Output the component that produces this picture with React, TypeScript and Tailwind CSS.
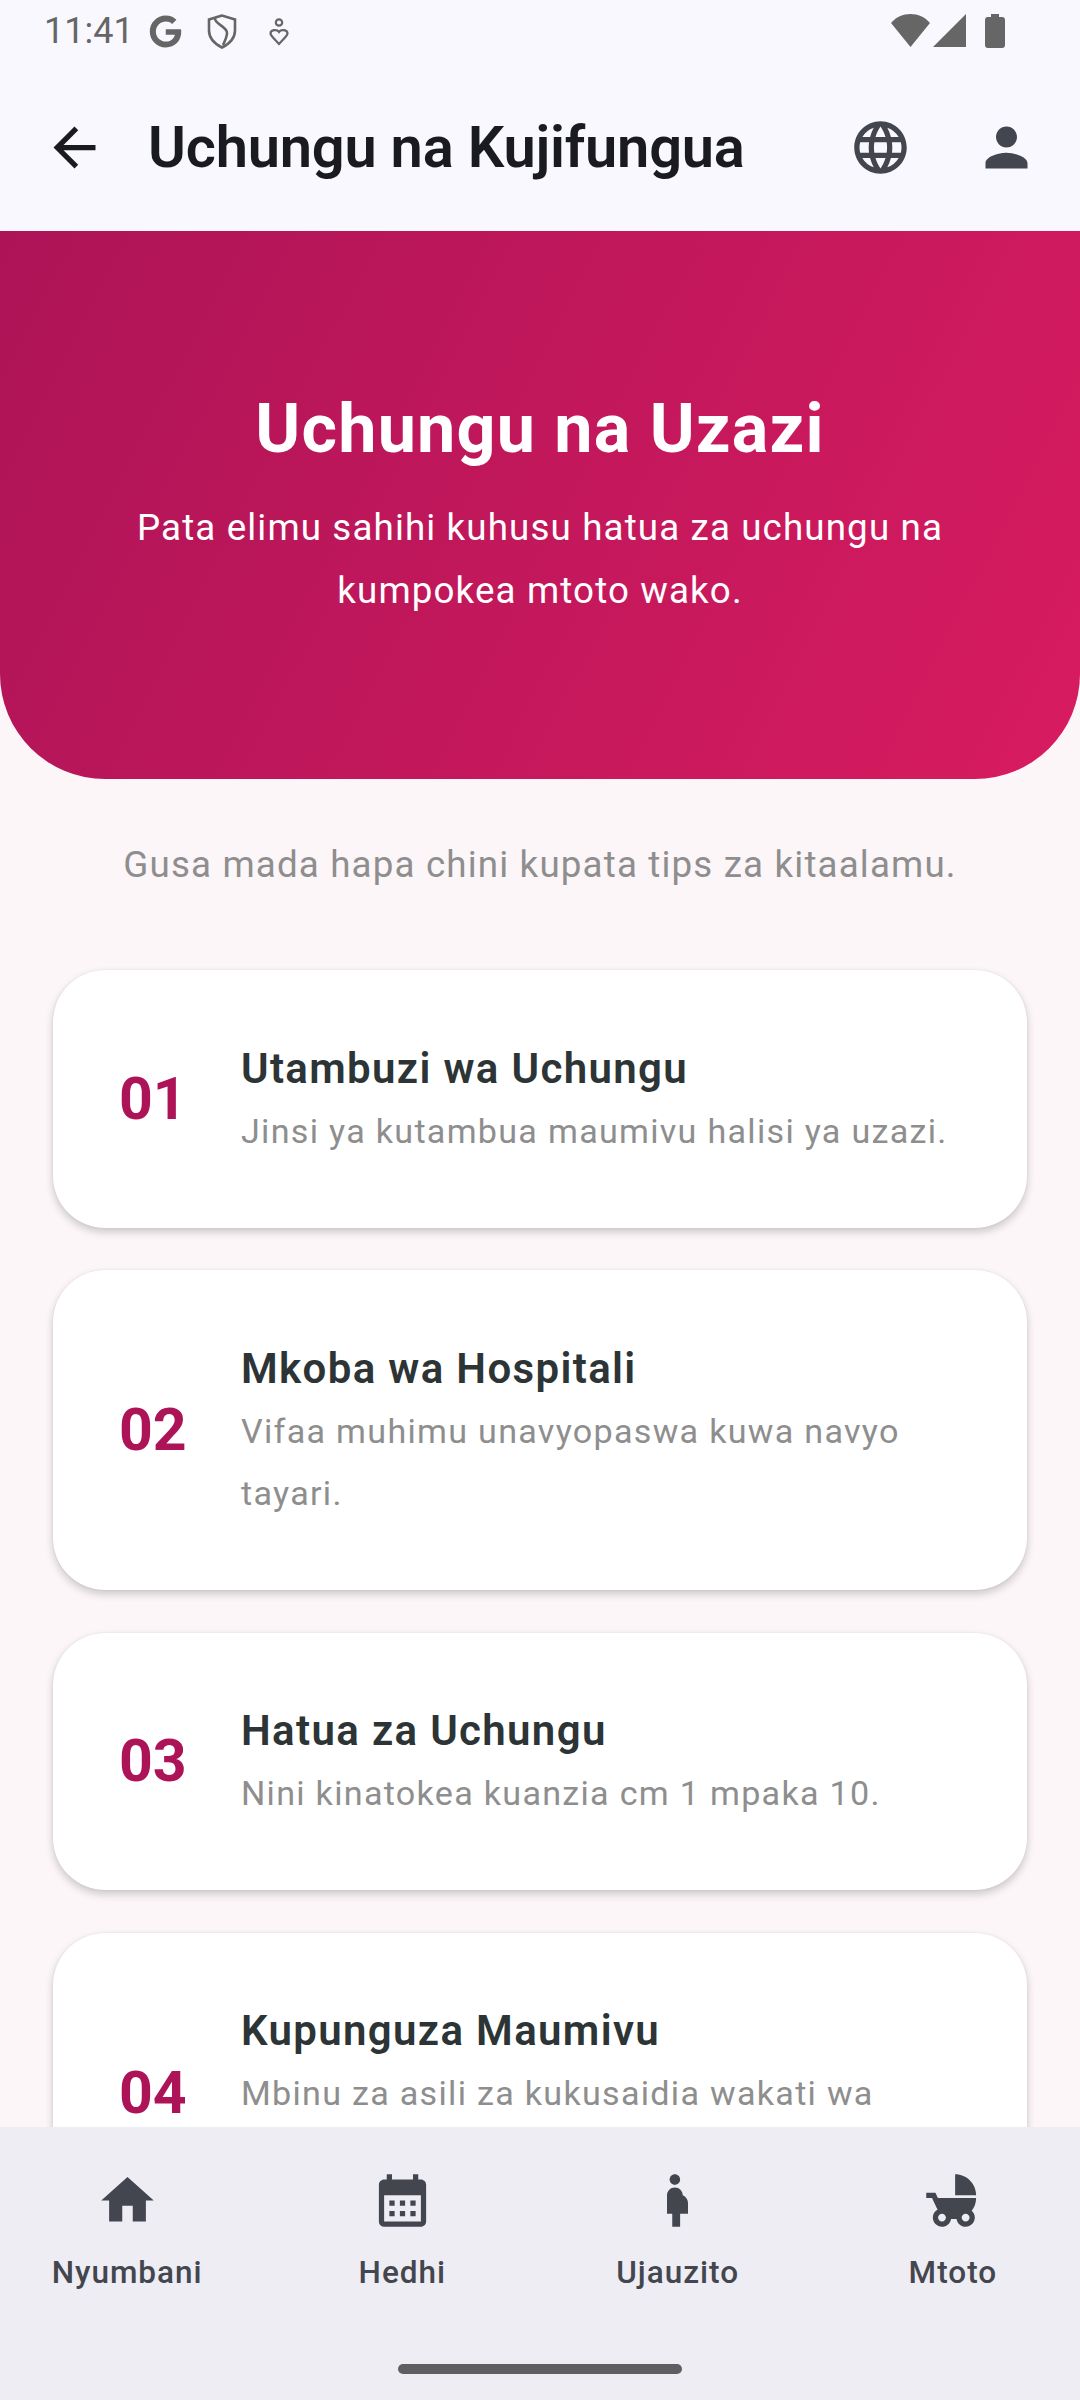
import { FaGoogle } from "react-icons/fa";

const cards = [
  { n: "01", title: "Utambuzi wa Uchungu", body: "Jinsi ya kutambua maumivu halisi ya uzazi." },
  { n: "02", title: "Mkoba wa Hospitali", body: "Vifaa muhimu unavyopaswa kuwa navyo tayari." },
  { n: "03", title: "Hatua za Uchungu", body: "Nini kinatokea kuanzia cm 1 mpaka 10." },
  { n: "04", title: "Kupunguza Maumivu", body: "Mbinu za asili za kukusaidia wakati wa uchungu." },
];

function StatusBar() {
  return (
    <div className="flex h-[63px] items-start justify-between pl-[44px] pr-[75px] pt-[14px] text-[#666666]">
      <div className="flex items-start">
        <span className="text-[36px] leading-[34px]">11:41</span>
        <FaGoogle className="ml-[15px] mt-[1px] h-[33px] w-[33px]" color="#666666" />
        <svg className="ml-[25px] h-[35px] w-[30px]" viewBox="0 0 30 35" fill="none" stroke="#666666" strokeWidth="2.6">
          <path d="M15 1.500 2 5.500v11c0 7 5 13 13 17 8-4 13-10 13-17v-11z" />
          <path d="M8 4c-1 6 12 8 12 15 0 4-2 8-4 12" />
        </svg>
        <svg className="ml-[32px] mt-[4px] h-[28px] w-[20px]" viewBox="0 0 20 28" fill="none" stroke="#666666" strokeWidth="2.2">
          <circle cx="10" cy="4.500" r="3.200" />
          <path d="M10 14c-2-3-8.500-2.500-8.500 1.500 0 1.500 1 2.500 8.500 10.500 7.500-8 8.500-9 8.500-10.500C18.500 11.500 12 11 10 14z" />
        </svg>
      </div>
      <div className="flex items-start">
        <svg className="h-[33px] w-[39px]" viewBox="0 0 39 33" fill="#666666">
          <path d="M0 9C5 3 12 0 19.500 0S34 3 39 9L19.500 33z" />
        </svg>
        <svg className="ml-[3px] h-[33px] w-[33px]" viewBox="0 0 33 33" fill="#666666">
          <path d="M33 0v33H0z" />
        </svg>
        <svg className="ml-[19px] h-[34px] w-[20px]" viewBox="0 0 20 34" fill="#666666">
          <path d="M6 0h8v3h3a3 3 0 0 1 3 3v25a3 3 0 0 1-3 3H3a3 3 0 0 1-3-3V6a3 3 0 0 1 3-3h3z" />
        </svg>
      </div>
    </div>
  );
}

function TopBar() {
  return (
    <div className="flex h-[168px] items-center pl-[11.5px] pr-[10.5px]">
      <div className="flex h-[126px] w-[126px] items-center justify-center">
        <svg className="h-[63px] w-[63px]" viewBox="0 0 24 24" fill="#1a1b20">
          <path d="M20 11H7.830l5.590-5.590L12 4l-8 8 8 8 1.410-1.410L7.830 13H20v-2z" />
        </svg>
      </div>
      <div className="ml-[10.5px] flex-1 text-[57.75px] font-semibold leading-[76px] tracking-[-0.2px] text-[#1a1b20]">
        Uchungu na Kujifungua
      </div>
      <div className="flex h-[126px] w-[126px] items-center justify-center">
        <svg className="h-[63px] w-[63px]" viewBox="0 0 24 24" fill="#44464f">
          <path d="M12 2C6.480 2 2 6.480 2 12s4.480 10 10 10 10-4.480 10-10S17.520 2 12 2zm6.930 6h-2.950a15.650 15.650 0 0 0-1.380-3.560A8.030 8.030 0 0 1 18.920 8zM12 4.040c.83 1.200 1.480 2.530 1.910 3.960h-3.820c.43-1.430 1.080-2.760 1.910-3.960zM4.260 14C4.100 13.360 4 12.690 4 12s.1-1.360.26-2h3.380c-.08.66-.14 1.320-.14 2s.06 1.340.14 2H4.260zm.82 2h2.950c.32 1.250.78 2.450 1.380 3.560A7.987 7.987 0 0 1 5.080 16zm2.950-8H5.080a7.987 7.987 0 0 1 4.330-3.560A15.650 15.650 0 0 0 8.030 8zM12 19.960c-.83-1.200-1.480-2.530-1.910-3.960h3.820c-.43 1.430-1.080 2.760-1.910 3.960zM14.340 14H9.660c-.09-.66-.16-1.320-.16-2s.07-1.350.16-2h4.680c.09.65.16 1.320.16 2s-.07 1.340-.16 2zm.25 5.560c.6-1.110 1.060-2.310 1.380-3.560h2.950a8.030 8.030 0 0 1-4.330 3.560zM16.360 14c.08-.66.14-1.320.14-2s-.06-1.340-.14-2h3.380c.16.64.26 1.310.26 2s-.1 1.360-.26 2h-3.380z" />
        </svg>
      </div>
      <div className="flex h-[126px] w-[126px] items-center justify-center">
        <svg className="h-[63px] w-[63px]" viewBox="0 0 24 24" fill="#44464f">
          <path d="M12 12c2.210 0 4-1.790 4-4s-1.790-4-4-4-4 1.790-4 4 1.790 4 4 4zm0 2c-2.670 0-8 1.340-8 4v2h16v-2c0-2.660-5.330-4-8-4z" />
        </svg>
      </div>
    </div>
  );
}

function Hero() {
  return (
    <div className="flex h-[548px] flex-col items-center rounded-b-[105px] bg-[linear-gradient(117deg,#ad1457,#d81b60)] pt-[157.5px] text-center text-white">
      <div className="text-[68.25px] font-bold leading-[80px] tracking-[1.2px]">Uchungu na Uzazi</div>
      <div className="mt-[27px] w-[860px] text-[36.75px] leading-[63px] tracking-[1.12px]">
        Pata elimu sahihi kuhusu hatua za uchungu na kumpokea mtoto wako.
      </div>
    </div>
  );
}

function Card({ n, title, body }: { n: string; title: string; body: string }) {
  return (
    <div className="flex items-center rounded-[52px] bg-white py-[65.5px] pl-[66px] pr-[66px] shadow-[0_4px_8px_rgba(0,0,0,0.2),0_0_2px_rgba(0,0,0,0.08)]">
      <div className="w-[122px] shrink-0 text-[59px] font-bold leading-[72px] text-[#ad1457]">{n}</div>
      <div className="min-w-0 flex-1 pt-[8px]">
        <div className="text-[42px] font-semibold leading-[49px] tracking-[1.34px] text-[#2d3436]">{title}</div>
        <div className="mt-[7px] text-[34.125px] leading-[62.5px] tracking-[1.28px] text-[#8e8e8e]">{body}</div>
      </div>
    </div>
  );
}

function HomeIcon() {
  return (
    <svg className="h-[63px] w-[63px]" viewBox="0 0 24 24" fill="#44464f">
      <path d="M10 20v-6h4v6h5v-8h3L12 3 2 12h3v8z" />
    </svg>
  );
}

function CalendarIcon() {
  return (
    <svg className="h-[63px] w-[63px]" viewBox="0 0 24 24" fill="#44464f">
      <path d="M19 4h-1V2h-2v2H8V2H6v2H5c-1.110 0-1.990.9-1.990 2L3 20a2 2 0 0 0 2 2h14c1.100 0 2-.9 2-2V6c0-1.100-.9-2-2-2zm0 16H5V10h14v10zM9 14H7v-2h2v2zm4 0h-2v-2h2v2zm4 0h-2v-2h2v2zm-8 4H7v-2h2v2zm4 0h-2v-2h2v2zm4 0h-2v-2h2v2z" />
    </svg>
  );
}

function PregnantIcon() {
  return (
    <svg className="h-[63px] w-[63px]" viewBox="0 0 24 24" fill="#44464f">
      <path d="M9 4c0-1.110.89-2 2-2s2 .89 2 2-.89 2-2 2-2-.89-2-2zm7 9c-.01-1.340-.83-2.510-2-3 0-1.660-1.340-3-3-3s-3 1.340-3 3v7h2v5h3v-5h3v-4z" />
    </svg>
  );
}

function StrollerIcon() {
  return (
    <svg className="h-[63px] w-[63px]" viewBox="0 0 24 24" fill="#44464f">
      <path d="M13 2v8h8c0-4.420-3.580-8-8-8zm6.320 13.890C20.370 14.540 21 12.840 21 11H6.440l-.95-2H2v2h2.220s1.890 4.070 2.120 4.420c-1.100.59-1.840 1.750-1.840 3.080C4.500 20.430 6.070 22 8 22c1.760 0 3.220-1.300 3.460-3h2.080c.24 1.700 1.700 3 3.460 3 1.930 0 3.500-1.570 3.500-3.500 0-1.040-.46-1.970-1.180-2.610zM8 20c-.83 0-1.500-.67-1.500-1.500S7.170 17 8 17s1.500.67 1.500 1.500S8.830 20 8 20zm9 0c-.83 0-1.500-.67-1.500-1.500S16.170 17 17 17s1.500.67 1.500 1.500S17.830 20 17 20z" />
    </svg>
  );
}

const tabs = [
  { label: "Nyumbani", icon: <HomeIcon /> },
  { label: "Hedhi", icon: <CalendarIcon /> },
  { label: "Ujauzito", icon: <PregnantIcon /> },
  { label: "Mtoto", icon: <StrollerIcon /> },
];

function BottomNav() {
  return (
    <div className="absolute inset-x-0 bottom-0 h-[273px] bg-[#eeedf4]">
      <div className="grid grid-cols-4 gap-x-[115px] px-[47px] pt-[42px]">
        {tabs.map((t) => (
          <div key={t.label} className="flex flex-col items-center">
            {t.icon}
            <div className="mt-[20px] text-[31.5px] font-medium leading-[42px] tracking-[1px] text-[#44464f]">{t.label}</div>
          </div>
        ))}
      </div>
      <div className="absolute bottom-[26px] left-1/2 h-[10px] w-[284px] -translate-x-1/2 rounded-full bg-[#5f5f62]" />
    </div>
  );
}

export default function App() {
  return (
    <div className="relative h-[2400px] w-[1080px] overflow-hidden bg-[#fcf6f9] font-['Roboto',sans-serif]">
      <div className="bg-[#f9f8ff]">
        <StatusBar />
        <TopBar />
      </div>
      <Hero />
      <div className="mt-[61.5px] text-center text-[36.75px] leading-[48px] tracking-[1.15px] text-[#8e8e8e]">
        Gusa mada hapa chini kupata tips za kitaalamu.
      </div>
      <div className="mt-[81.5px] flex flex-col gap-[42.5px] px-[53px]">
        {cards.map((c) => (
          <Card key={c.n} {...c} />
        ))}
      </div>
      <BottomNav />
    </div>
  );
}
